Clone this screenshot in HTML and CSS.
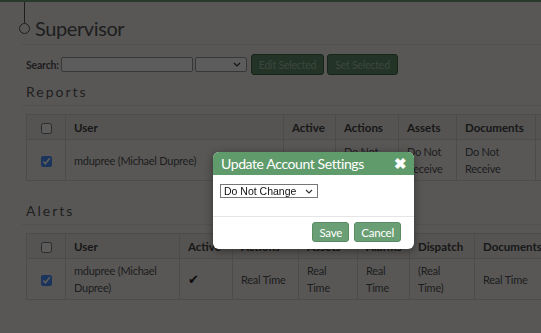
FILE: index.html
```html
<!DOCTYPE html>
<html lang="en">
<head>
  <meta charset="UTF-8" />
  <title>Supervisor</title>
  <link rel="stylesheet" href="styles.css">
</head>
<body>

  <div class="page">
    <!-- title with timeline marker -->
    <div class="title-row">
      <span class="marker"></span>
      <h1>Supervisor</h1>
    </div>
    <hr />

    <div class="search-row">
      <label for="search">Search:</label>
      <input type="text" id="search" />
      <select class="filter"><option></option></select>
      <button class="btn">Edit Selected</button>
      <button class="btn">Set Selected</button>
    </div>

    <h3>Reports</h3>
    <hr />
    <table class="grid reports">
      <colgroup>
        <col style="width:39px"><col style="width:218px"><col style="width:52px"><col style="width:63px">
        <col style="width:58px"><col style="width:79px"><col style="width:80px">
      </colgroup>
      <tr>
        <th class="chk"><input type="checkbox" /></th>
        <th>User</th>
        <th>Active</th>
        <th>Actions</th>
        <th>Assets</th>
        <th>Documents</th>
        <th></th>
      </tr>
      <tr>
        <td class="chk"><input type="checkbox" checked /></td>
        <td>mdupree (Michael Dupree)</td>
        <td></td>
        <td>Do Not<br>Receive</td>
        <td>Do Not<br>Receive</td>
        <td>Do Not<br>Receive</td>
        <td></td>
      </tr>
    </table>

    <h3 class="second">Alerts</h3>
    <hr />
    <table class="grid alerts">
      <colgroup>
        <col style="width:39px"><col style="width:114px"><col style="width:53px"><col style="width:66px">
        <col style="width:59px"><col style="width:52px"><col style="width:65px"><col style="width:80px">
      </colgroup>
      <tr>
        <th class="chk"><input type="checkbox" /></th>
        <th>User</th>
        <th>Active</th>
        <th>Actions</th>
        <th>Assets</th>
        <th>Alarms</th>
        <th>Dispatch</th>
        <th>Documents</th>
      </tr>
      <tr>
        <td class="chk"><input type="checkbox" checked /></td>
        <td>mdupree (Michael<br>Dupree)</td>
        <td class="tick">&#10004;</td>
        <td>Real Time</td>
        <td>Real<br>Time</td>
        <td>Real<br>Time</td>
        <td>(Real<br>Time)</td>
        <td>Real Time</td>
      </tr>
    </table>
  </div>

  <div class="overlay"></div>

  <!-- dialog -->
  <div class="modal">
    <div class="modal-head">
      <span>Update Account Settings</span>
      <span class="close">&#10006;</span>
    </div>
    <div class="modal-body">
      <select class="choice">
        <option>Do Not Change</option>
        <option>Real Time</option>
        <option>Do Not Receive</option>
      </select>
    </div>
    <div class="modal-foot">
      <button class="btn">Save</button>
      <button class="btn">Cancel</button>
    </div>
  </div>

</body>
</html>
```

FILE: styles.css
```css
body {
  margin: 0;
  background: #f4f2ef;
  font-family: Lato, 'Noto Sans', sans-serif;
  color: #555;
  overflow: hidden;
}

.page {
  border-top: 2px solid #6b9f76;
  padding-left: 22px;
  height: 331px;
  overflow: hidden;
}

.title-row {
  display: flex;
  align-items: center;
  height: 42px;
  padding-top: 10px;
  box-sizing: border-box;
  margin-left: -3px;
}

.marker {
  position: relative;
  width: 9px;
  height: 9px;
  border: 1.5px solid #555;
  border-radius: 50%;
  margin-right: 5px;
}

.marker::before {
  content: "";
  position: absolute;
  left: 3.5px;
  bottom: 10px;
  width: 1.5px;
  height: 24px;
  background: #555;
}

h1 {
  margin: 0;
  font-size: 20px;
  font-weight: 400;
  letter-spacing: -0.4px;
  line-height: 24px;
  color: #555;
}

hr {
  margin: 0;
  border: none;
  border-top: 1px solid #e2e0dd;
}

.search-row {
  display: flex;
  align-items: center;
  gap: 2px;
  padding: 9px 0 0 4px;
  height: 21px;
}

.search-row label {
  font-size: 10.5px;
  font-weight: 700;
  letter-spacing: -0.2px;
  color: #555;
}

.search-row input {
  width: 132px;
  height: 15px;
  box-sizing: border-box;
  border: 1px solid #999;
  border-radius: 2px;
  padding: 0;
}

select {
  appearance: none;
  background: #fff url("data:image/svg+xml,%3Csvg xmlns='http://www.w3.org/2000/svg' width='8' height='5' viewBox='0 0 8 5'%3E%3Cpath d='M1 1l3 3 3-3' fill='none' stroke='%23333' stroke-width='1.2'/%3E%3C/svg%3E") no-repeat right 5px center;
}

.filter {
  width: 52px;
  height: 15px;
  box-sizing: border-box;
  border: 1px solid #999;
  border-radius: 2px;
  margin-right: 1px;
}

.btn {
  font-family: inherit;
  font-size: 10.5px;
  letter-spacing: -0.2px;
  color: rgba(255, 255, 255, 0.45);
  background: #62906b;
  border: 1px solid #3f6448;
  border-radius: 3px;
  padding: 0 7px;
  height: 21px;
  margin-left: 1px;
}

h3 {
  margin: 0;
  padding: 7px 0 3px 4px;
  height: 20px;
  font-size: 14px;
  font-weight: 400;
  letter-spacing: 2px;
  color: #5a5a5a;
  line-height: 20px;
}

h3.second {
  margin-top: 13px;
}

.grid {
  border-collapse: collapse;
  table-layout: fixed;
  margin: 8px 0 0 4px;
  font-size: 11px;
  letter-spacing: -0.25px;
  color: #555;
}

.reports {
  width: 589px;
}

.alerts {
  width: 528px;
}

.grid th,
.grid td {
  border: 1px solid #d6d3cf;
  text-align: left;
  padding: 0 8px;
  line-height: 17px;
  white-space: nowrap;
  overflow: hidden;
}

.grid th {
  height: 24px;
  font-size: 11.5px;
  letter-spacing: 0;
  font-weight: 700;
  color: #444;
  background: #ebe8e4;
}

.grid td {
  height: 40px;
}

.grid .chk {
  text-align: center;
  padding: 0;
}

.chk input {
  width: 11px;
  height: 11px;
  margin: 0;
  vertical-align: middle;
  accent-color: #4a90ff;
}

.tick {
  font-size: 13px;
  color: #222;
  padding-left: 12px;
}

.overlay {
  position: fixed;
  inset: 0;
  background: rgba(0, 0, 0, 0.64);
}

.modal {
  position: absolute;
  left: 213px;
  top: 152px;
  width: 201px;
  background: #fff;
  border-radius: 6px;
  overflow: hidden;
  box-shadow: 0 2px 8px rgba(0, 0, 0, 0.4);
}

.modal-head {
  display: flex;
  justify-content: space-between;
  align-items: center;
  background: #5f9b6b;
  color: #fff;
  height: 23px;
  padding: 0 7px 0 8px;
  font-size: 14px;
  letter-spacing: -0.4px;
}

.close {
  font-size: 15px;
  font-weight: 700;
}

.modal-body {
  padding: 9px 7px 18px;
  border-bottom: 1px solid #e5e5e5;
}

.choice {
  display: block;
  box-sizing: border-box;
  font-family: 'Liberation Sans', Arial, sans-serif;
  font-size: 10.5px;
  width: 98px;
  height: 14px;
  padding: 0 0 0 3px;
  border: 1px solid #767676;
  border-radius: 0;
  color: #111;
  background-position: right 4px center;
}

.modal-foot {
  display: flex;
  justify-content: flex-end;
  gap: 5px;
  padding: 5px 13px 7px;
}

.modal-foot .btn {
  color: #fff;
  background: #6a9f75;
  border-color: #5a8c64;
  font-size: 11.5px;
  height: 20px;
  padding: 0 6px;
  margin: 0;
}
```
